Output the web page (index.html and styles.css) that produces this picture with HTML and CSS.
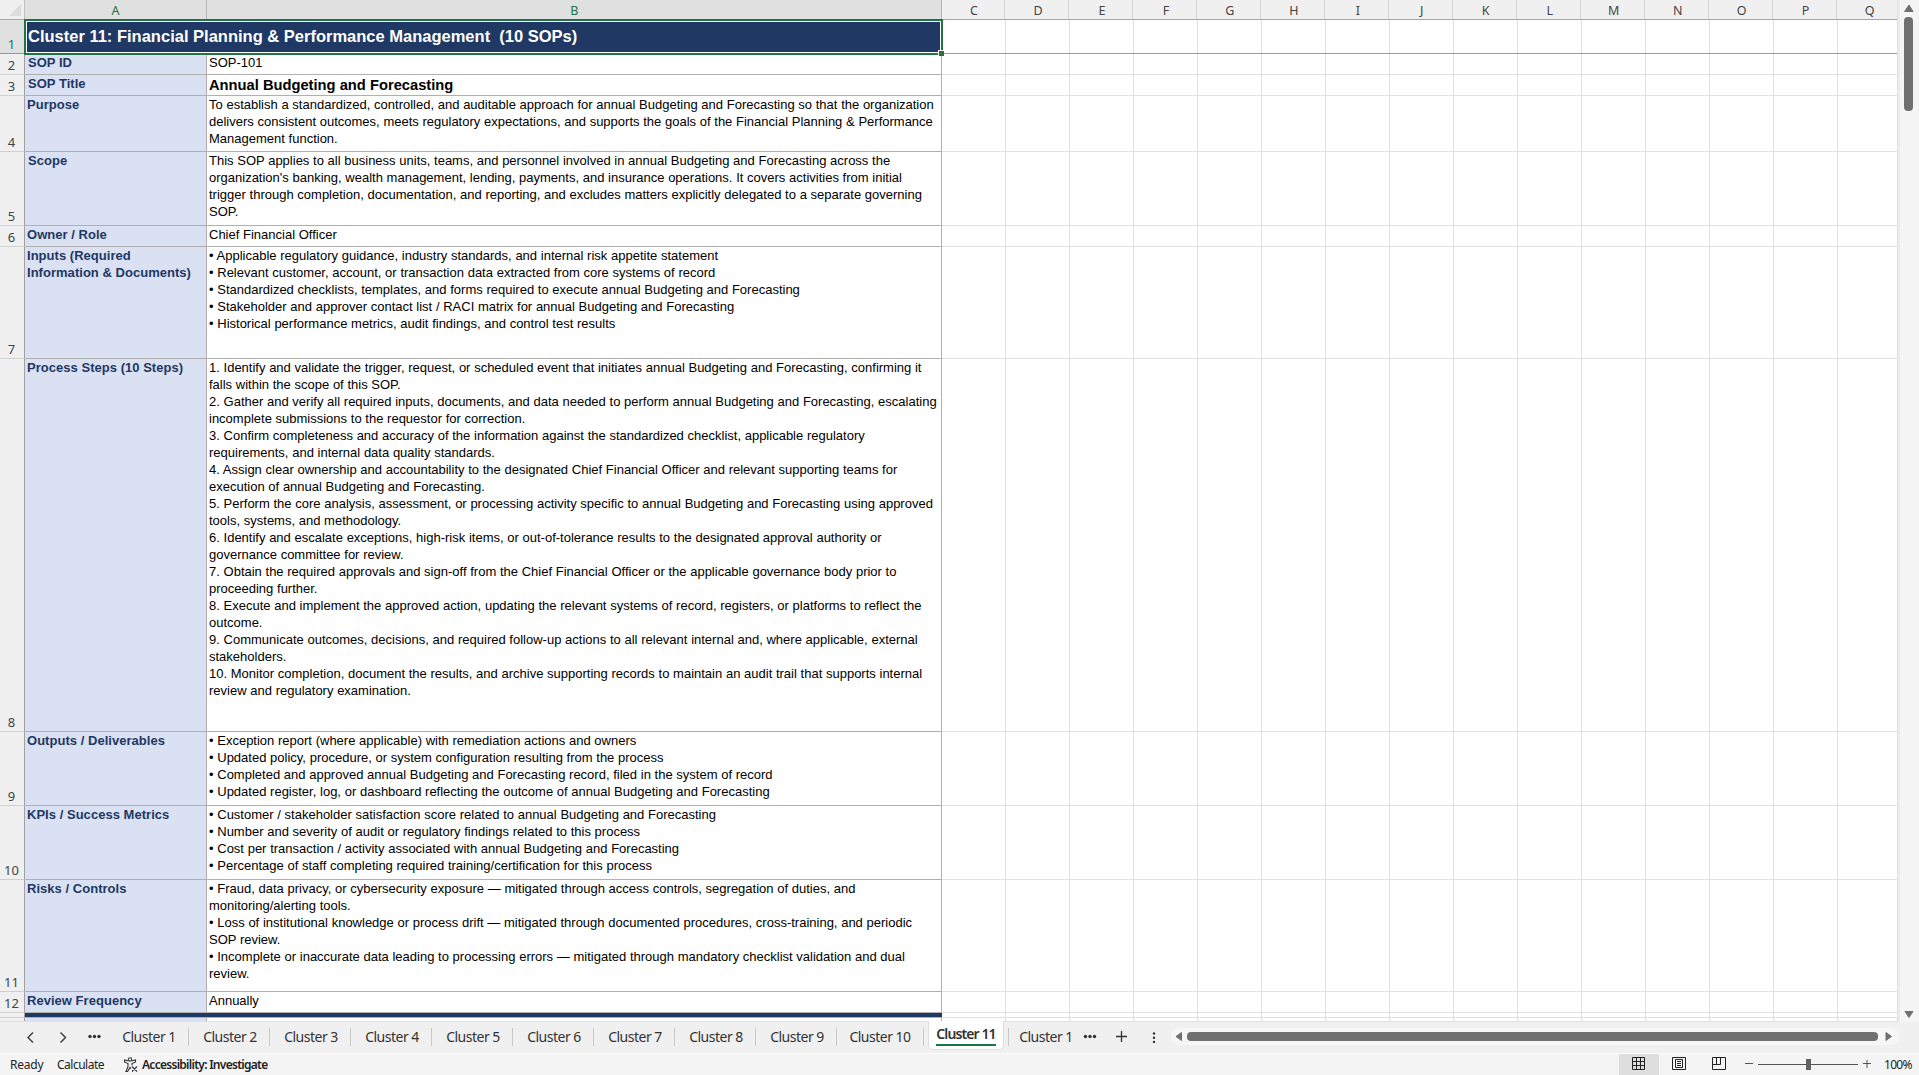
FILE: index.html
```html
<!DOCTYPE html>
<html lang="en">
<head>
<meta charset="utf-8">
<title>Cluster 11</title>
<link rel="stylesheet" href="styles.css">
</head>
<body>
<div class="app">
  <div class="view">
    <main class="sheet">
      <div class="colhead">
        <div class="corner"><svg width="25" height="19" viewBox="0 0 25 19"><path d="M21 4v12H9z" fill="#dcdcdc"/></svg></div>
        <div class="ch ch-a sel">A</div><div class="ch ch-b sel">B</div>
        <div class="ch">C</div><div class="ch">D</div><div class="ch">E</div><div class="ch">F</div><div class="ch">G</div><div class="ch">H</div><div class="ch">I</div><div class="ch">J</div><div class="ch">K</div><div class="ch">L</div><div class="ch">M</div><div class="ch">N</div><div class="ch">O</div><div class="ch">P</div><div class="ch ch-q">Q</div>
      </div>
      <div class="row r1"><div class="num sel">1</div><div class="title">Cluster 11: Financial Planning &amp; Performance Management&nbsp; (10 SOPs)<i class="handle"></i></div><div class="rest"></div></div>
      <div class="row r2"><div class="num">2</div><div class="a">SOP ID</div><div class="b">SOP-101</div><div class="rest"></div></div>
      <div class="row r3"><div class="num">3</div><div class="a">SOP Title</div><div class="b name">Annual Budgeting and Forecasting</div><div class="rest"></div></div>
      <div class="row r4"><div class="num">4</div><div class="a">Purpose</div><div class="b">To establish a standardized, controlled, and auditable approach for annual Budgeting and Forecasting so that the organization
delivers consistent outcomes, meets regulatory expectations, and supports the goals of the Financial Planning &amp; Performance
Management function.</div><div class="rest"></div></div>
      <div class="row r5"><div class="num">5</div><div class="a">Scope</div><div class="b">This SOP applies to all business units, teams, and personnel involved in annual Budgeting and Forecasting across the
organization's banking, wealth management, lending, payments, and insurance operations. It covers activities from initial
trigger through completion, documentation, and reporting, and excludes matters explicitly delegated to a separate governing
SOP.</div><div class="rest"></div></div>
      <div class="row r6"><div class="num">6</div><div class="a">Owner / Role</div><div class="b">Chief Financial Officer</div><div class="rest"></div></div>
      <div class="row r7"><div class="num">7</div><div class="a">Inputs (Required
Information &amp; Documents)</div><div class="b">• Applicable regulatory guidance, industry standards, and internal risk appetite statement
• Relevant customer, account, or transaction data extracted from core systems of record
• Standardized checklists, templates, and forms required to execute annual Budgeting and Forecasting
• Stakeholder and approver contact list / RACI matrix for annual Budgeting and Forecasting
• Historical performance metrics, audit findings, and control test results</div><div class="rest"></div></div>
      <div class="row r8"><div class="num">8</div><div class="a">Process Steps (10 Steps)</div><div class="b">1. Identify and validate the trigger, request, or scheduled event that initiates annual Budgeting and Forecasting, confirming it
falls within the scope of this SOP.
2. Gather and verify all required inputs, documents, and data needed to perform annual Budgeting and Forecasting, escalating
incomplete submissions to the requestor for correction.
3. Confirm completeness and accuracy of the information against the standardized checklist, applicable regulatory
requirements, and internal data quality standards.
4. Assign clear ownership and accountability to the designated Chief Financial Officer and relevant supporting teams for
execution of annual Budgeting and Forecasting.
5. Perform the core analysis, assessment, or processing activity specific to annual Budgeting and Forecasting using approved
tools, systems, and methodology.
6. Identify and escalate exceptions, high-risk items, or out-of-tolerance results to the designated approval authority or
governance committee for review.
7. Obtain the required approvals and sign-off from the Chief Financial Officer or the applicable governance body prior to
proceeding further.
8. Execute and implement the approved action, updating the relevant systems of record, registers, or platforms to reflect the
outcome.
9. Communicate outcomes, decisions, and required follow-up actions to all relevant internal and, where applicable, external
stakeholders.
10. Monitor completion, document the results, and archive supporting records to maintain an audit trail that supports internal
review and regulatory examination.</div><div class="rest"></div></div>
      <div class="row r9"><div class="num">9</div><div class="a">Outputs / Deliverables</div><div class="b">• Exception report (where applicable) with remediation actions and owners
• Updated policy, procedure, or system configuration resulting from the process
• Completed and approved annual Budgeting and Forecasting record, filed in the system of record
• Updated register, log, or dashboard reflecting the outcome of annual Budgeting and Forecasting</div><div class="rest"></div></div>
      <div class="row r10"><div class="num">10</div><div class="a">KPIs / Success Metrics</div><div class="b">• Customer / stakeholder satisfaction score related to annual Budgeting and Forecasting
• Number and severity of audit or regulatory findings related to this process
• Cost per transaction / activity associated with annual Budgeting and Forecasting
• Percentage of staff completing required training/certification for this process</div><div class="rest"></div></div>
      <div class="row r11"><div class="num">11</div><div class="a">Risks / Controls</div><div class="b">• Fraud, data privacy, or cybersecurity exposure — mitigated through access controls, segregation of duties, and
monitoring/alerting tools.
• Loss of institutional knowledge or process drift — mitigated through documented procedures, cross-training, and periodic
SOP review.
• Incomplete or inaccurate data leading to processing errors — mitigated through mandatory checklist validation and dual
review.</div><div class="rest"></div></div>
      <div class="row r12"><div class="num">12</div><div class="a">Review Frequency</div><div class="b">Annually</div><div class="rest"></div></div>
      <div class="row r13"><div class="num"></div><div class="band"></div><div class="rest"></div></div>
      <div class="row r14"><div class="num"></div><div class="a"></div><div class="b"></div><div class="rest"></div></div>
    </main>
    <div class="vscroll">
      <svg width="19" height="1023" viewBox="0 0 19 1023"><path d="M9 5l4 6.500H4.500z" fill="#707070" stroke="#707070" stroke-linejoin="round"/><rect x="4" y="17" width="9" height="94" rx="4" fill="#707070"/><path d="M5 1011.500h8l-4 6z" fill="#707070" stroke="#707070" stroke-linejoin="round"/></svg>
    </div>
  </div>
  <nav class="tabs">
    <div class="navs">
      <svg width="108" height="31" viewBox="0 0 108 31" fill="none" stroke="#444" stroke-width="1.500"><path d="M33 10.500l-5 5 5 5M60.500 10.500l5 5-5 5"/><g fill="#333" stroke="none"><circle cx="90" cy="14.500" r="1.700"/><circle cx="94.500" cy="14.500" r="1.700"/><circle cx="99" cy="14.500" r="1.700"/></g></svg>
    </div>
    <div class="tab">Cluster 1</div><div class="tab">Cluster 2</div><div class="tab">Cluster 3</div><div class="tab">Cluster 4</div><div class="tab">Cluster 5</div><div class="tab">Cluster 6</div><div class="tab">Cluster 7</div><div class="tab">Cluster 8</div><div class="tab">Cluster 9</div><div class="tab wide">Cluster 10</div>
    <div class="active"><span>Cluster 11</span></div>
    <div class="tab next">Cluster 1</div>
    <svg class="tools" width="90" height="31" viewBox="0 0 90 31" fill="#333"><circle cx="4.500" cy="14.500" r="1.700"/><circle cx="9" cy="14.500" r="1.700"/><circle cx="13.500" cy="14.500" r="1.700"/><path d="M35 14.500h11M40.500 9v11" stroke="#333" stroke-width="1.300"/><circle cx="73" cy="11.500" r="1.200"/><circle cx="73" cy="15.700" r="1.200"/><circle cx="73" cy="19.900" r="1.200"/></svg>
    <div class="hscroll"><svg width="728" height="17" viewBox="0 0 728 17" fill="#707070"><path d="M10.500 4.500v8l-5.500-4z" stroke="#707070" stroke-linejoin="round"/><rect x="16" y="4" width="691" height="9" rx="4"/><path d="M715 4.500v8l5.500-4z" stroke="#707070" stroke-linejoin="round"/></svg></div>
  </nav>
  <footer class="status">
    <span class="s-ready">Ready</span><span class="s-calc">Calculate</span>
    <svg class="acc" width="16" height="16" viewBox="0 0 16 16" fill="none" stroke="#333" stroke-width="1.100"><circle cx="7" cy="2.500" r="1.700"/><path d="M5 3.800L1.500 3v2L5 6.500v3L3 14.500h1.600L7 10.500l1 1M9 3.800l3.500-.8v2L9 6.500v2M9 9.500l5 5M14 9.500l-5 5"/></svg>
    <span class="s-acc">Accessibility: Investigate</span>
    <div class="views">
      <div class="v on"><svg width="14" height="14" viewBox="0 0 14 14" fill="none" stroke="#222"><path d="M.5.5h12v12H.5zM4.500.5v12M8.500.5v12M.5 4.500h12M.5 8.500h12"/></svg></div>
      <div class="v"><svg width="14" height="14" viewBox="0 0 14 14" fill="none" stroke="#222"><path d="M.5.5h13v12H.5zM3.500 2.500h7v8h-7zM5 4.500h4M5 6.500h4M5 8.500h4"/></svg></div>
      <div class="v"><svg width="14" height="14" viewBox="0 0 14 14" fill="none" stroke="#222"><path d="M.5.5h13v12H.5zM4.500.5v7M8.500.5v7M.5 7.500h8"/></svg></div>
    </div>
    <svg class="zoom" width="128" height="21" viewBox="0 0 128 21" fill="none" stroke="#555"><path d="M1 9.500h8M14 10.500h100M119 9.500h8M123 6v8"/><rect x="62" y="5" width="5" height="11" fill="#606060" stroke="none"/></svg>
    <span class="pct">100%</span>
  </footer>
</div>
</body>
</html>
```
FILE: styles.css
```css
* { box-sizing: border-box; }
body { margin: 0; background: #f0f0f0; font-family: "Noto Sans", sans-serif; overflow: hidden; }
svg { display: block; }
.app { width: 1919px; height: 1075px; display: flex; flex-direction: column; }
.view { display: flex; height: 1022px; flex: none; }
.sheet { width: 1898px; height: 1022px; overflow: hidden; background: #fff; border-right: 1px solid #e0e0e0; border-bottom: 1px solid #e0e0e0; }
.vscroll { flex: 1; background: #f4f4f4; border-left: 2px solid #ececec; }

.colhead { display: flex; height: 20px; background: #f0f0f0; border-bottom: 1px solid #a6a6a6; font-size: 12.5px; line-height: 22px; color: #444; text-align: center; }
.corner { width: 25px; border-right: 1px solid #c0c0c0; }
.ch { width: 64px; height: 19px; padding-left: 2px; border-right: 1px solid #d4d4d4; }
.ch.sel { background: #e0e0e0; color: #217346; border-right-color: #b4b4b4; }
.ch.ch-a { width: 182px; padding-left: 0; }
.ch.ch-b { width: 735px; padding-left: 1px; }
.ch.ch-q { width: 60px; border-right: 0; padding-left: 5px; }

.row { display: flex; font: 13px/17px "Liberation Sans", Arial, sans-serif; color: #000; }
.num { width: 25px; flex: none; display: flex; align-items: flex-end; justify-content: center; background: #f0f0f0; border-right: 1px solid #a0a0a0; border-bottom: 1px solid #d0d0d0; font: 13px/17px "Noto Sans", sans-serif; color: #444; overflow: hidden; padding-right: 1px; }
.num.sel { background: #e0e0e0; color: #217346; }
.a { width: 182px; flex: none; padding-left: 2px; background: #d9e1f2; color: #1f3864; font-weight: bold; border-right: 1px solid #b0b0b0; border-bottom: 1px solid #b0b0b0; white-space: pre; overflow: hidden; letter-spacing: .03px; }
.r2 .a, .r3 .a, .r5 .a { padding-left: 3px; }
.b { width: 735px; flex: none; padding-left: 2px; border-right: 1px solid #b0b0b0; border-bottom: 1px solid #b0b0b0; white-space: pre; overflow: hidden; word-spacing: .08px; }
.rest { flex: 1; border-bottom: 1px solid #e0e0e0; background: repeating-linear-gradient(to right, transparent 0 63px, #e0e0e0 63px 64px); }
.r1 { height: 34px; }
.r1 .num, .r1 .rest { border-bottom-color: #999; }
.title { position: relative; width: 919px; margin: -1px -1px -1px -1px; flex: none; z-index: 1; background: #1f3864; color: #fff; border: 2px solid #217346; box-shadow: inset 0 0 0 1px #fff; font: bold 16.5px/30px "Liberation Sans", Arial, sans-serif; padding-left: 2px; white-space: pre; }
.handle { position: absolute; right: -3px; bottom: -3px; width: 6px; height: 6px; background: #217346; border: 1px solid #fff; border-right: 0; border-bottom: 0; }
.r2, .r3, .r6, .r12 { height: 21px; }
.r4 { height: 56px; }
.r5, .r9, .r10 { height: 74px; }
.r7, .r11 { height: 112px; }
.r8 { height: 373px; }
.r13 { height: 5px; }
.r14 { height: 4px; }
.name { font-weight: bold; font-size: 14.7px; line-height: 20px; }
.band { width: 917px; flex: none; background: #1f3864; border-bottom: 1px solid #b0b0b0; }

.tabs { display: flex; height: 31px; flex: none; background: #f0f0f0; font-size: 14px; color: #333; }
.navs { width: 108px; }
.tab { width: 81px; height: 18px; margin-top: 6px; padding-left: 2px; line-height: 18px; border-right: 1px solid #c8c8c8; text-align: center; white-space: nowrap; letter-spacing: -.5px; }
.tab.wide { width: 87px; padding-left: 0; }
.active { width: 76px; height: 29px; margin: -1px 4px 0 4px; background: #fff; border: 1px solid #dcdcdc; border-top: 0; border-radius: 0 0 5px 5px; text-align: center; font-weight: 600; letter-spacing: -.9px; line-height: 26px; }
.active span { display: block; margin: 0 7px; height: 25px; border-bottom: 2px solid #107c41; white-space: nowrap; }
.tab.next { width: 73px; border-right: 0; border-left: 1px solid #c8c8c8; }
.hscroll { width: 728px; height: 17px; margin-top: 6px; background: #f6f6f6; border-radius: 8px; }

.status { display: flex; height: 22px; flex: none; background: #f4f4f4; border-top: 1px solid #fff; font-size: 12px; line-height: 21px; color: #222; white-space: nowrap; }
.s-ready { margin-left: 10px; width: 47px; letter-spacing: -.2px; }
.s-calc { width: 66px; letter-spacing: -.5px; }
.acc { margin: 3px 3px 0 0; }
.s-acc { font-weight: 600; letter-spacing: -.72px; }
.views { display: flex; margin-left: auto; }
.v { width: 40px; height: 21px; padding: 3px 0 0 13px; }
.v.on { background: #dedede; }
.zoom { margin-left: 5px; }
.pct { width: 35px; margin-left: 12px; letter-spacing: -.7px; }
```
